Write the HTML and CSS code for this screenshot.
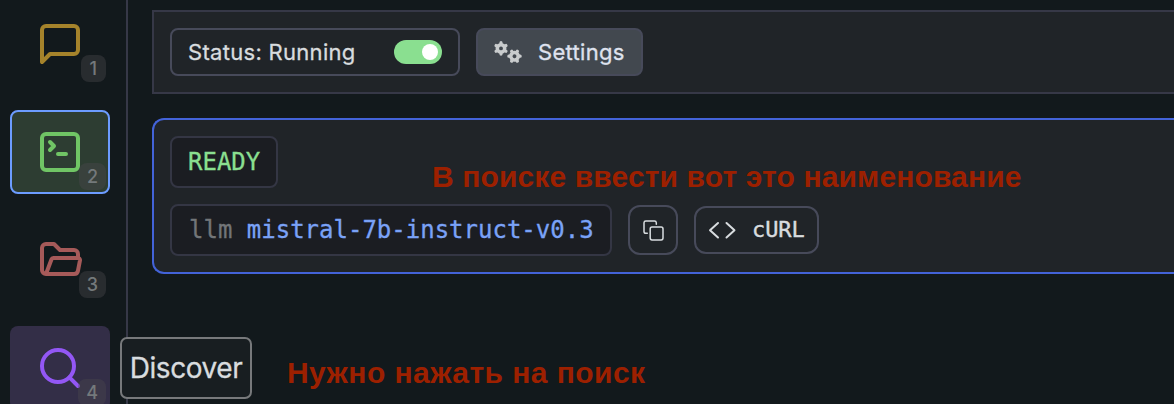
FILE: index.html
```html
<!DOCTYPE html>
<html lang="ru">
<head>
<meta charset="utf-8">
<title>Discover</title>
<link rel="stylesheet" href="styles.css">
</head>
<body>
<div class="app">
  <nav class="sidebar">
    <div class="nav-item chat">
      <svg class="nav-icon" viewBox="0 0 24 24"><path d="M21 15a2 2 0 0 1-2 2H7l-4 4V5a2 2 0 0 1 2-2h14a2 2 0 0 1 2 2z"/></svg>
      <span class="badge">1</span>
    </div>
    <div class="nav-item terminal">
      <svg class="nav-icon" viewBox="0 0 24 24"><path d="m7 11 2-2-2-2M11 13h4"/><rect x="3" y="3" width="18" height="18" rx="2"/></svg>
      <span class="badge">2</span>
    </div>
    <div class="nav-item folder">
      <svg class="nav-icon" viewBox="0 0 24 24"><path d="M5 19l2.757-7.351a1 1 0 0 1 .936-.649H21a1 1 0 0 1 .986 1.164l-.996 5.211A2 2 0 0 1 19.026 19H5a2 2 0 0 1-2-2V6a2 2 0 0 1 2-2h4l3 3h7a2 2 0 0 1 2 2v2"/></svg>
      <span class="badge">3</span>
    </div>
    <div class="nav-item search">
      <svg class="nav-icon" viewBox="0 0 24 24"><circle cx="11" cy="11" r="8"/><path d="m21 21-4.3-4.3"/></svg>
      <span class="badge">4</span>
      <span class="tooltip">Discover</span>
    </div>
  </nav>
  <main class="main">
    <section class="toolbar">
      <div class="status"><span class="status-text">Status: Running</span><span class="toggle"><span class="knob"></span></span></div>
      <div class="settings">
        <svg class="gears" viewBox="0 0 28 24">
          <g transform="translate(7 8.4)">
            <circle r="3.7"/>
            <path class="teeth" d="M0-5.7V-4M0 5.7V4M4.9-2.85 3.5-2M-4.9-2.85-3.5-2M4.9 2.85 3.5 2M-4.9 2.85-3.5 2"/>
          </g>
          <g transform="translate(20.5 16.2) rotate(30)">
            <circle r="3.7"/>
            <path class="teeth" d="M0-5.7V-4M0 5.7V4M4.9-2.85 3.5-2M-4.9-2.85-3.5-2M4.9 2.85 3.5 2M-4.9 2.85-3.5 2"/>
          </g>
        </svg>
        <span class="settings-text">Settings</span>
      </div>
    </section>
    <section class="card">
      <div class="field">READY</div>
      <div class="row">
        <div class="field model"><span class="prefix">llm</span> mistral-7b-instruct-v0.3</div>
        <div class="copy"><svg class="copy-icon" viewBox="0 0 21 21"><rect x="7.2" y="7.1" width="12.8" height="12.8" rx="1.8"/><path d="M4.3 13.2H2.800A1.800 1.800 0 0 1 1 11.400V2.700A1.800 1.800 0 0 1 2.800 1h8.700a1.800 1.800 0 0 1 1.800 1.700v1.600"/></svg></div>
        <div class="curl"><svg class="code-icon" viewBox="0 0 28 18"><path d="M10 2 2 9.200 10 16.500M18.500 2l8 7.200-8 7.300"/></svg><span>cURL</span></div>
      </div>
      <span class="note note-name">В поиске ввести вот это наименование</span>
    </section>
    <span class="note note-search">Нужно нажать на поиск</span>
  </main>
</div>
</body>
</html>
```
FILE: styles.css
```css
* { box-sizing: border-box; }
body {
  margin: 0;
  height: 404px;
  overflow: hidden;
  background: #12191c;
  color: #d8dcdf;
  font-family: Inter, "Liberation Sans", sans-serif;
}
svg { display: block; fill: none; stroke: currentColor; stroke-linecap: round; stroke-linejoin: round; }
.app { display: flex; height: 404px; }
.sidebar {
  flex: 0 0 128px;
  display: flex;
  flex-direction: column;
  gap: 24px;
  padding: 2px 16px 0 10px;
  border-right: 2px solid #363847;
}
.nav-item {
  position: relative;
  flex: 0 0 84px;
  width: 100px;
  display: flex;
  align-items: center;
  justify-content: center;
  border-radius: 8px;
}
.nav-icon { width: 48px; height: 48px; stroke-width: 2; }
.chat { color: #a5832b; }
.terminal { color: #70c565; background: #2d3d32; border: 2px solid #6c9cff; }
.folder { color: #a65a59; }
.search { color: #9357f5; background: #332e47; }
.badge {
  position: absolute;
  right: 4px;
  bottom: 4px;
  height: 27px;
  padding: 0 8px;
  border-radius: 8px;
  background: rgba(76, 72, 78, .4);
  color: #74797b;
  font-size: 18px;
  font-weight: 500;
  line-height: 28px;
}
.chat .badge { padding: 0 9px; }
.terminal .badge { right: 2px; bottom: 2px; }
.tooltip {
  position: absolute;
  z-index: 2;
  left: 110px;
  top: 11px;
  width: 132px;
  height: 62px;
  border: 2px solid #77797b;
  border-radius: 7px;
  background: #181e21;
  color: #d8dcdf;
  font-size: 28px;
  letter-spacing: -.45px;
  line-height: 59px;
  text-align: center;
  -webkit-text-stroke: .3px currentColor;
}
.main { position: relative; flex: 1; padding: 10px 0 0 24px; }
.toolbar {
  display: flex;
  gap: 16px;
  height: 84px;
  padding: 16px;
  border: 2px solid #363847;
  border-right: 0;
  background: #202428;
  font-size: 22px;
  -webkit-text-stroke: .3px currentColor;
}
.status {
  display: flex;
  align-items: center;
  justify-content: space-between;
  width: 290px;
  height: 48px;
  padding: 0 16px;
  border: 2px solid #474a5a;
  border-radius: 8px;
}
.status-text { letter-spacing: .3px; }
.toggle {
  display: flex;
  justify-content: flex-end;
  align-items: center;
  width: 48px;
  height: 24px;
  padding-right: 4px;
  border-radius: 12px;
  background: #8adf90;
}
.knob { width: 16px; height: 16px; border-radius: 50%; background: #fff; }
.settings {
  display: flex;
  align-items: center;
  width: 167px;
  height: 48px;
  padding-left: 16px;
  gap: 16px;
  border: 2px solid #474a5a;
  border-radius: 8px;
  background: #42484f;
  color: #dfe2ee;
}
.settings-text { letter-spacing: .3px; }
.gears { width: 28px; height: 24px; color: #c9cccd; }
.gears circle { stroke-width: 3.5; }
.gears .teeth { stroke-width: 3.2; }
.card {
  position: relative;
  display: flex;
  flex-direction: column;
  align-items: flex-start;
  gap: 16px;
  height: 156px;
  margin-top: 24px;
  padding: 16px;
  border: 2px solid #4363d8;
  border-right: 0;
  border-radius: 12px 0 0 12px;
  background: #202428;
}
.field {
  height: 52px;
  padding: 0 16px;
  border: 2px solid #343644;
  border-radius: 8px;
  background: #1b1d22;
  color: #8adf90;
  font: 24px/48px "DejaVu Sans Mono", monospace;
  white-space: pre;
  -webkit-text-stroke: .3px currentColor;
}
.row { display: flex; align-items: center; gap: 16px; }
.model { width: 442px; padding-left: 17px; color: #7aa2f7; }
.prefix { color: #727578; }
.copy {
  display: flex;
  align-items: center;
  justify-content: center;
  width: 50px;
  height: 50px;
  border: 2px solid #474a5a;
  border-radius: 12px;
}
.copy-icon { width: 21px; height: 21px; stroke-width: 1.5; }
.curl {
  display: flex;
  align-items: center;
  gap: 16px;
  width: 125px;
  height: 48px;
  padding-left: 12px;
  border: 2px solid #474a5a;
  border-radius: 12px;
  font: 22px/44px "DejaVu Sans Mono", monospace;
  letter-spacing: -.1px;
  -webkit-text-stroke: .4px currentColor;
}
.code-icon { width: 28px; height: 18px; stroke-width: 2; }
.note {
  position: absolute;
  color: #9d2000;
  font: bold 30px/36px "Liberation Sans", sans-serif;
  white-space: nowrap;
}
.note-name { left: 278px; top: 39px; letter-spacing: .13px; }
.note-search { left: 159px; top: 355px; letter-spacing: .45px; }
```
